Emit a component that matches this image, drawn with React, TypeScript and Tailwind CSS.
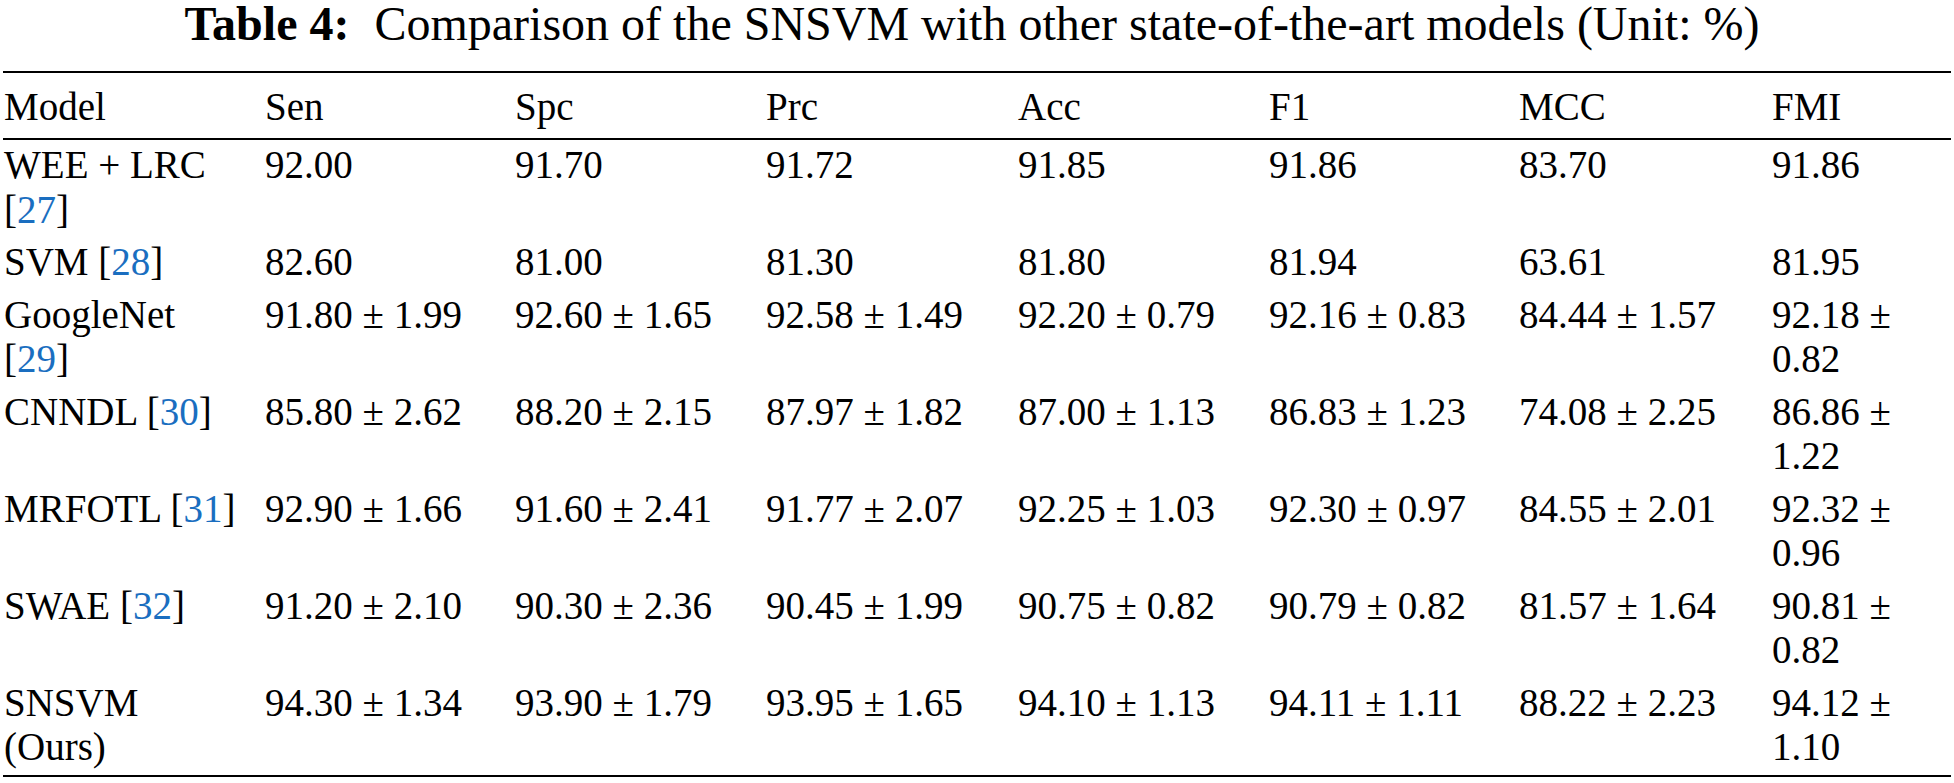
import type { ReactNode } from 'react';

type Row = {
    model: ReactNode;
    values: string[];
};

const Ref = ({ n }: { n: number }) => (
    <>
        [<span className="text-[#1a6ec0]">{n}</span>]
    </>
);

const headers = ['Model', 'Sen', 'Spc', 'Prc', 'Acc', 'F1', 'MCC', 'FMI'];

const rows: Row[] = [
    {
        model: <>WEE + LRC <Ref n={27} /></>,
        values: ['92.00', '91.70', '91.72', '91.85', '91.86', '83.70', '91.86'],
    },
    {
        model: <>SVM <Ref n={28} /></>,
        values: ['82.60', '81.00', '81.30', '81.80', '81.94', '63.61', '81.95'],
    },
    {
        model: <>GoogleNet <Ref n={29} /></>,
        values: ['91.80 ± 1.99', '92.60 ± 1.65', '92.58 ± 1.49', '92.20 ± 0.79', '92.16 ± 0.83', '84.44 ± 1.57', '92.18 ± 0.82'],
    },
    {
        model: <>CNNDL <Ref n={30} /></>,
        values: ['85.80 ± 2.62', '88.20 ± 2.15', '87.97 ± 1.82', '87.00 ± 1.13', '86.83 ± 1.23', '74.08 ± 2.25', '86.86 ± 1.22'],
    },
    {
        model: <>MRFOTL <Ref n={31} /></>,
        values: ['92.90 ± 1.66', '91.60 ± 2.41', '91.77 ± 2.07', '92.25 ± 1.03', '92.30 ± 0.97', '84.55 ± 2.01', '92.32 ± 0.96'],
    },
    {
        model: <>SWAE <Ref n={32} /></>,
        values: ['91.20 ± 2.10', '90.30 ± 2.36', '90.45 ± 1.99', '90.75 ± 0.82', '90.79 ± 0.82', '81.57 ± 1.64', '90.81 ± 0.82'],
    },
    {
        model: <>SNSVM (Ours)</>,
        values: ['94.30 ± 1.34', '93.90 ± 1.79', '93.95 ± 1.65', '94.10 ± 1.13', '94.11 ± 1.11', '88.22 ± 2.23', '94.12 ± 1.10'],
    },
];

export default function App() {
    return (
        <div className="w-[1954px] h-[783px] bg-white text-black font-['Liberation_Serif',serif] overflow-hidden">
            {/* Caption */}
            <p className="text-center text-[48px] leading-[47px] whitespace-nowrap pr-[10px]">
                <span className="font-bold">Table 4:</span>
                <span className="ml-[25px]">Comparison of the SNSVM with other state-of-the-art models (Unit: %)</span>
            </p>

            <table className="mt-[24px] ml-[3px] w-[1948px] table-fixed border-collapse text-[39px] leading-[44.5px] text-left">
                <colgroup>
                    <col className="w-[261px]" />
                    <col className="w-[250px]" />
                    <col className="w-[251px]" />
                    <col className="w-[252px]" />
                    <col className="w-[251px]" />
                    <col className="w-[250px]" />
                    <col className="w-[253px]" />
                    <col className="w-[180px]" />
                </colgroup>
                <thead>
                    <tr className="border-t-2 border-b-2 border-black">
                        {headers.map((h, i) => (
                            <th
                                key={h}
                                className={`font-normal align-top pl-[1px] pt-[12px] pb-[8.5px] ${i === 0 ? 'pr-[20px]' : 'pr-0'}`}
                            >
                                {h}
                            </th>
                        ))}
                    </tr>
                </thead>
                <tbody className="border-b-2 border-black">
                    {rows.map((row, r) => (
                        <tr key={r}>
                            <td className="align-top pl-[1px] pr-[20px] pt-[3px] pb-[5px]">{row.model}</td>
                            {row.values.map((v, c) => (
                                <td key={c} className="align-top pl-[1px] pr-0 pt-[3px] pb-[5px]">
                                    {v}
                                </td>
                            ))}
                        </tr>
                    ))}
                </tbody>
            </table>
        </div>
    );
}
